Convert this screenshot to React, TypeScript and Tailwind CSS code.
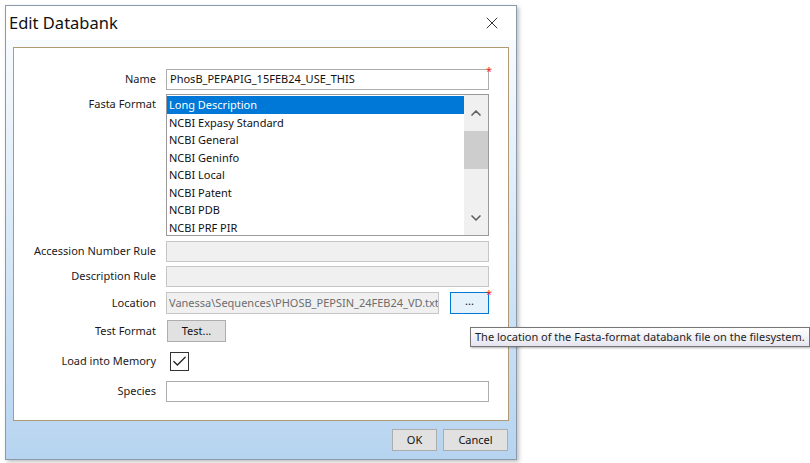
import { Check, ChevronUp, ChevronDown, X } from 'lucide-react'

const formats = [
  'Long Description',
  'NCBI Expasy Standard',
  'NCBI General',
  'NCBI Geninfo',
  'NCBI Local',
  'NCBI Patent',
  'NCBI PDB',
  'NCBI PRF PIR',
]

function Asterisk() {
  return (
    <span className="absolute -right-[4px] -top-[5px] text-[11px] leading-none text-[#ff2020]">*</span>
  )
}

function Row({ label, className = '', labelClass = '', children }: { label: string; className?: string; labelClass?: string; children: React.ReactNode }) {
  return (
    <div className={`flex ${className}`}>
      <div className={`w-[142px] shrink-0 whitespace-nowrap text-right text-[#1a1a1a] ${labelClass}`}>{label}</div>
      <div className="ml-[10px] flex flex-1 items-center">{children}</div>
    </div>
  )
}

export default function App() {
  return (
    <div
      className="relative h-[463px] w-[810px] overflow-hidden bg-white pl-[5px] pt-[5px] text-[11px] text-[#111]"
      style={{ fontFamily: '"Noto Sans", "Open Sans", sans-serif' }}
    >
      {/* Dialog window */}
      <div className="flex h-[455px] w-[512px] flex-col border border-[#8a9aab] bg-white shadow-[2px_2px_4px_rgba(0,0,0,0.25)]">
        {/* Title bar */}
        <div className="flex h-[34px] shrink-0 items-center justify-between bg-white pl-[3px] pr-[14px]">
          <span className="text-[16.5px] text-[#111]">Edit Databank</span>
          <X size={20} strokeWidth={1.1} className="text-[#222]" />
        </div>

        {/* Client area */}
        <div className="flex flex-1 flex-col bg-gradient-to-b from-[#f8fbfe] to-[#b6d4f0] px-[7px] pt-[7px]">
          <div className="flex h-[374px] flex-col border border-[#b09a74] bg-white pr-[19px] pt-[21px]">
            <Row label="Name" className="items-center">
              <div className="relative flex h-[21px] flex-1 items-center border border-[#adadad] bg-white pl-[3px]">
                PhosB_PEPAPIG_15FEB24_USE_THIS
                <Asterisk />
              </div>
            </Row>

            <Row label="Fasta Format" className="mt-[4px] items-start" labelClass="pt-[1px] leading-[17px]">
              <div className="flex h-[142px] flex-1 border border-[#9a9a9a] bg-white">
                <div className="flex flex-1 flex-col pt-[1px]">
                  {formats.map((f, i) => (
                    <div
                      key={f}
                      className={`h-[17.5px] pl-[2px] leading-[17.5px] ${i === 0 ? 'bg-[#0078d7] text-white' : ''}`}
                    >
                      {f}
                    </div>
                  ))}
                </div>
                <div className="flex w-[24px] flex-col bg-[#f0f0f0]">
                  <div className="flex h-[36px] items-center justify-center">
                    <ChevronUp size={16} strokeWidth={2.5} className="text-[#606060]" />
                  </div>
                  <div className="h-[38px] bg-[#cdcdcd]" />
                  <div className="flex-1" />
                  <div className="flex h-[34px] items-center justify-center">
                    <ChevronDown size={16} strokeWidth={2.5} className="text-[#606060]" />
                  </div>
                </div>
              </div>
            </Row>

            <Row label="Accession Number Rule" className="mt-[5px] items-center">
              <div className="h-[21px] flex-1 border border-[#c6c6c6] bg-[#f0f0f0]" />
            </Row>

            <Row label="Description Rule" className="mt-[4px] items-center">
              <div className="h-[21px] flex-1 border border-[#c6c6c6] bg-[#f0f0f0]" />
            </Row>

            <Row label="Location" className="mt-[5px] items-center">
              <div className="flex h-[22px] w-[273px] items-center overflow-hidden whitespace-nowrap border border-[#c6c6c6] bg-[#f0f0f0] pl-[2px] text-[#6d6d6d]">
                Vanessa\Sequences\PHOSB_PEPSIN_24FEB24_VD.txt
              </div>
              <div className="relative ml-[11px] flex h-[22px] flex-1 items-center justify-center border border-[#0078d7] bg-[#e5f1fb] pb-[4px]">
                ...
                <Asterisk />
              </div>
            </Row>

            <Row label="Test Format" className="mt-[6px] items-center">
              <div className="ml-[1px] flex h-[22px] w-[59px] items-center justify-center border border-[#adadad] bg-[#e1e1e1]">
                Test...
              </div>
            </Row>

            <Row label="Load into Memory" className="mt-[10px] items-center">
              <div className="ml-[4px] flex h-[19px] w-[19px] items-center justify-center border border-[#333] bg-white">
                <Check size={17} strokeWidth={1.8} className="text-[#222]" />
              </div>
            </Row>

            <Row label="Species" className="mt-[10px] items-center">
              <div className="h-[21px] flex-1 border border-[#adadad] bg-white" />
            </Row>
          </div>

          {/* Buttons */}
          <div className="flex justify-end gap-[6px] pr-[1px] pt-[8px]">
            <div className="flex h-[22px] w-[45px] items-center justify-center border border-[#adadad] bg-[#e1e1e1]">OK</div>
            <div className="flex h-[22px] w-[65px] items-center justify-center border border-[#adadad] bg-[#e1e1e1]">Cancel</div>
          </div>
        </div>
      </div>

      {/* Tooltip */}
      <div className="absolute left-[470px] top-[327px] flex h-[20px] items-center whitespace-nowrap border border-[#767676] bg-gradient-to-b from-white to-[#e4e5f0] px-[4px] text-[#1e1e1e] shadow-[1px_1px_2px_rgba(0,0,0,0.3)]">
        The location of the Fasta-format databank file on the filesystem.
      </div>
    </div>
  )
}
